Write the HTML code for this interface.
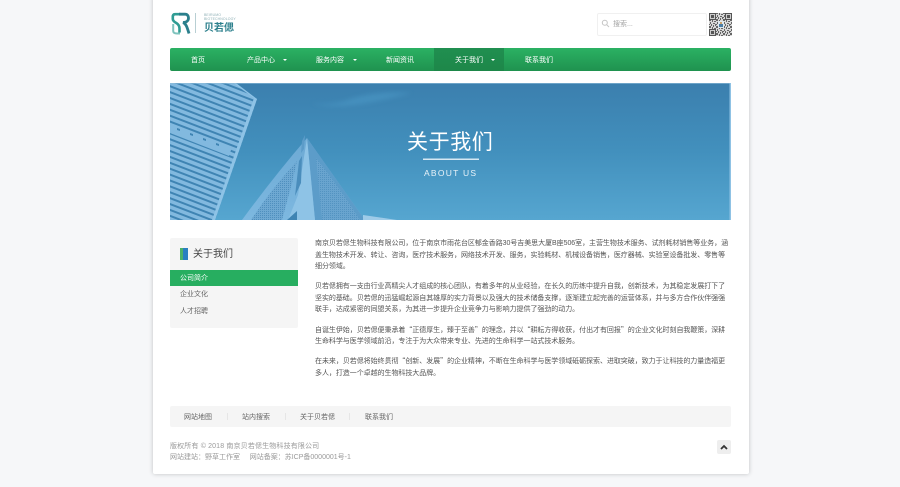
<!DOCTYPE html>
<html lang="zh"><head><meta charset="utf-8"><title>关于我们</title>
<style>
*{margin:0;padding:0;box-sizing:border-box}
html,body{width:900px;height:487px;overflow:hidden;background:#f6f7f9;font-family:"Liberation Sans","Noto Sans CJK SC",sans-serif}
#r{position:absolute;left:0;top:0;width:900px;height:487px;filter:blur(.35px)}
#w{position:absolute;left:153px;top:-4px;width:596px;height:478px;background:#fff;box-shadow:0 0 5px rgba(0,0,0,.22);border-radius:2px}
.a{position:absolute;white-space:nowrap;line-height:12px;font-size:7px}
.n{color:#fff;top:55px}
.c{position:absolute;width:0;height:0;border-left:2.700px solid transparent;border-right:2.700px solid transparent;border-top:2.700px solid #fff;top:59px}
.t{color:#555;left:315px;letter-spacing:-.05px}
.t i{font-style:normal;font-family:"Noto Sans CJK SC",sans-serif}
.f{color:#666;top:412px}
.s{position:absolute;top:413px;width:1px;height:7px;background:#e6e6e6}
.g{color:#999;left:170px}
</style></head><body>
<div id="r">
<div id="w"></div>

<svg class="a" style="left:171px;top:12px" width="20" height="23" viewBox="0 0 20 23" fill="none">
<path d="M9.500 2.200H4C2.300 2.200 1.800 3.200 1.800 4.800V7C1.800 9 3.500 10 5.300 11C7.300 12.200 8.500 14 8.500 16.500V20.500" stroke="#2f9c93" stroke-width="2.600"/>
<path d="M2.200 12V19C2.200 21 4 21.500 6 21.500H9" stroke="#7fc3bd" stroke-width="2"/>
<path d="M8 2.200H14C16.500 2.200 17.500 4 17.500 6C17.500 9 15 10.500 12 10.500C15 11.500 16 15 18 21.500" stroke="#2b7f8c" stroke-width="2.800"/>
</svg>
<div class="a" style="left:195px;top:13px;width:1px;height:20px;background:#b8cfd3"></div>
<div class="a" style="left:204px;top:12.500px;font-size:3.500px;line-height:4.500px;color:#8fb0b6;letter-spacing:.1px">BEIRUMO<br>BIOTECHNOLOGY</div>
<div class="a" style="left:204px;top:21.500px;font-size:10px;line-height:13px;font-weight:700;color:#2b7f8c">贝若偲</div>

<div class="a" style="left:597px;top:13px;width:110px;height:23px;border:1px solid #f0f0f0;border-radius:2px;background:#fff"></div>
<svg class="a" style="left:601px;top:19px" width="9" height="9" viewBox="0 0 9 9" fill="none" stroke="#c4c4c4"><circle cx="3.800" cy="3.800" r="2.500"/><path d="M5.800 5.800L8 8"/></svg>
<div class="a" style="left:613px;top:19px;color:#a5a5a5">搜索...</div>

<svg class="a" style="left:709px;top:13px" width="23" height="23" viewBox="0 0 23 23" shape-rendering="crispEdges">
<defs><pattern id="q" width="7" height="7" patternUnits="userSpaceOnUse"><path fill="#666" d="M0 0h2v1H0zM3 0h1v2H3zM5 1h2v1H5zM1 2h1v2H1zM4 3h2v1H4zM0 4h1v1H0zM2 4h1v2H2zM6 4h1v2H6zM0 6h2v1H0zM4 5h1v2H4z"/></pattern></defs>
<rect width="23" height="23" fill="#d8d8d8"/><rect width="23" height="23" fill="url(#q)"/>
<path fill="#555" d="M0 0h7v7H0zM16 0h7v7h-7zM0 16h7v7H0z"/>
<path fill="#ccc" d="M1 1h5v5H1zM17 1h5v5h-5zM1 17h5v5H1z"/>
<path fill="#555" d="M2 2h3v3H2zM18 2h3v3h-3zM2 18h3v3H2z"/>
<rect x="9" y="8" width="6" height="7" fill="#dfe8ee"/><rect x="11" y="9" width="2" height="2" fill="#c9a06c"/><rect x="10" y="11" width="4" height="3" fill="#4b7ea5"/>
</svg>

<div class="a" style="left:170px;top:48px;width:561px;height:23px;border-radius:2px;background:linear-gradient(#2bb163,#1f924f)"></div>
<div class="a" style="left:434px;top:48px;width:70px;height:23px;background:linear-gradient(#208f50,#1d8749)"></div>
<div class="a n" style="left:191px">首页</div>
<div class="a n" style="left:247px">产品中心</div><div class="c" style="left:282.500px"></div>
<div class="a n" style="left:316px">服务内容</div><div class="c" style="left:352.500px"></div>
<div class="a n" style="left:386px">新闻资讯</div>
<div class="a n" style="left:455px">关于我们</div><div class="c" style="left:490.500px"></div>
<div class="a n" style="left:525px">联系我们</div>

<svg class="a" style="left:170px;top:83px" width="561" height="137" viewBox="0 0 561 137">
<defs>
<linearGradient id="sky" x1="0" y1="0" x2="0" y2="1"><stop offset="0" stop-color="#3b7fae"/><stop offset=".5" stop-color="#4290bd"/><stop offset="1" stop-color="#56a6d0"/></linearGradient>
<linearGradient id="b2" x1="0" y1="0" x2="0" y2="1"><stop offset="0" stop-color="#6ca9d4"/><stop offset="1" stop-color="#7db8e0"/></linearGradient>
<pattern id="fl" width="6" height="5.500" patternUnits="userSpaceOnUse" patternTransform="rotate(21)"><rect width="6" height="5.500" fill="#82b9df"/><rect y="2" width="6" height="2" fill="#3f84b3"/></pattern>
<pattern id="gr" width="2" height="2" patternUnits="userSpaceOnUse"><rect width="2" height="2" fill="#6ea8d2"/><rect width="1" height="1" fill="#4f8fbe"/></pattern>
<filter id="bl" x="-20%" y="-50%" width="140%" height="200%"><feGaussianBlur stdDeviation="2.500"/></filter>
</defs>
<rect width="561" height="137" fill="url(#sky)"/>
<path d="M140 20C170 28 200 20 242 10C215 8 190 12 175 18C165 21 150 22 140 20Z" fill="#4a95c3" opacity=".7" filter="url(#bl)"/>
<path d="M0 0H63L87 16L45 137H0Z" fill="url(#fl)"/>
<path d="M0 40L62 64L59 73L0 50Z" fill="#82b9df"/>
<path fill="#3f84b3" d="M7 45l3 1v2l-3-1zM20 50l3 1v2l-3-1zM33 55l3 1v2l-3-1zM46 60l3 1v2l-3-1z"/>
<path d="M87 16L45 137H42L84 15L63 0H66Z" fill="#8ec3e6"/>
<path d="M137 55Q105 92 72 137H195Q165 95 137 55Z" fill="url(#b2)"/>
<path d="M81 137Q100 108 127 78L122 100L112 137Z" fill="url(#gr)"/>
<path d="M137 55Q165 95 195 137H145Z" fill="#5c9cc9"/>
<path d="M146 75Q170 105 190 137H152Z" fill="url(#gr)" opacity=".7"/>
<path d="M137 55L145 137H118L128 112Z" fill="#8ec3e6"/>
<path d="M117 137L127 128V137Z" fill="#3f84b3"/>
<path d="M129 78L132 73L131 100L125 113Z" fill="#4a8dbc"/>
<path d="M132 58L135 52L134 66L131 70Z" fill="#5c9cc9"/>
<path d="M193 132L227 137H193Z" fill="#9ecbe8"/>
<rect x="0" y="0" width="561" height="1" fill="#8fbcd8" opacity=".6"/>
<rect x="559.500" y="0" width="1.500" height="137" fill="#8fc2e4"/>
<rect x="253" y="75.500" width="56" height="1.500" fill="#d6e8f3"/>
</svg>
<div class="a" style="left:407px;top:130px;line-height:26px;font-size:21px;color:#fff;letter-spacing:.6px">关于我们</div>
<div class="a" style="left:424px;top:167px;font-size:8.500px;color:#eaf3f9;letter-spacing:1.250px">ABOUT US</div>

<div class="a" style="left:170px;top:238px;width:128px;height:90px;background:#f5f5f5;border-radius:2px"></div>
<div class="a" style="left:180px;top:248px;width:3px;height:12px;background:#4cb167"></div>
<div class="a" style="left:183px;top:248px;width:5px;height:12px;background:#2a7fc0"></div>
<div class="a" style="left:193px;top:248px;font-size:10px;line-height:14px;color:#444">关于我们</div>
<div class="a" style="left:170px;top:270px;width:128px;height:16px;background:#27ae60"></div>
<div class="a" style="left:180px;top:273px;color:#fff">公司简介</div>
<div class="a" style="left:180px;top:289px;color:#666">企业文化</div>
<div class="a" style="left:180px;top:306px;color:#666">人才招聘</div>

<div class="a t" style="top:238px">南京贝若偲生物科技有限公司，位于南京市雨花台区郁金香路30号吉美思大厦B座506室，主营生物技术服务、试剂耗材销售等业务，涵</div>
<div class="a t" style="top:250px">盖生物技术开发、转让、咨询，医疗技术服务，网络技术开发、服务，实验耗材、机械设备销售，医疗器械、实验室设备批发、零售等</div>
<div class="a t" style="top:261px">细分领域。</div>
<div class="a t" style="top:281px">贝若偲拥有一支由行业高精尖人才组成的核心团队，有着多年的从业经验，在长久的历练中提升自我，创新技术，为其稳定发展打下了</div>
<div class="a t" style="top:293px">坚实的基础。贝若偲的迅猛崛起源自其雄厚的实力背景以及强大的技术储备支撑，逐渐建立起完善的运营体系，并与多方合作伙伴强强</div>
<div class="a t" style="top:304px">联手，达成紧密的同盟关系，为其进一步提升企业竞争力与影响力提供了强劲的动力。</div>
<div class="a t" style="top:324px">自诞生伊始，贝若偲便秉承着<i>“</i>正德厚生，臻于至善<i>”</i>的理念，并以<i>“</i>耕耘方得收获，付出才有回报<i>”</i>的企业文化时刻自我鞭策，深耕</div>
<div class="a t" style="top:336px">生命科学与医学领域前沿，专注于为大众带来专业、先进的生命科学一站式技术服务。</div>
<div class="a t" style="top:355px">在未来，贝若偲将始终贯彻<i>“</i>创新、发展<i>”</i>的企业精神，不断在生命科学与医学领域砥砺探索、进取突破，致力于让科技的力量造福更</div>
<div class="a t" style="top:368px">多人，打造一个卓越的生物科技大品牌。</div>

<div class="a" style="left:170px;top:406px;width:561px;height:21px;background:#f5f5f5;border-radius:2px"></div>
<div class="a f" style="left:184px">网站地图</div><div class="s" style="left:227px"></div>
<div class="a f" style="left:242px">站内搜索</div><div class="s" style="left:285px"></div>
<div class="a f" style="left:300px">关于贝若偲</div><div class="s" style="left:349px"></div>
<div class="a f" style="left:365px">联系我们</div>

<div class="a g" style="top:441px;letter-spacing:.15px">版权所有 © 2018 南京贝若偲生物科技有限公司</div>
<div class="a g" style="top:452px">网站建站：野草工作室 &nbsp; &nbsp; 网站备案：苏ICP备0000001号-1</div>

<div class="a" style="left:717px;top:440px;width:14px;height:14px;background:#eee;border-radius:2px"></div>
<svg class="a" style="left:720px;top:444px" width="8" height="6" viewBox="0 0 8 6" fill="none" stroke="#333" stroke-width="1.800"><path d="M1 5L4 2L7 5"/></svg>
</div>
</body></html>
